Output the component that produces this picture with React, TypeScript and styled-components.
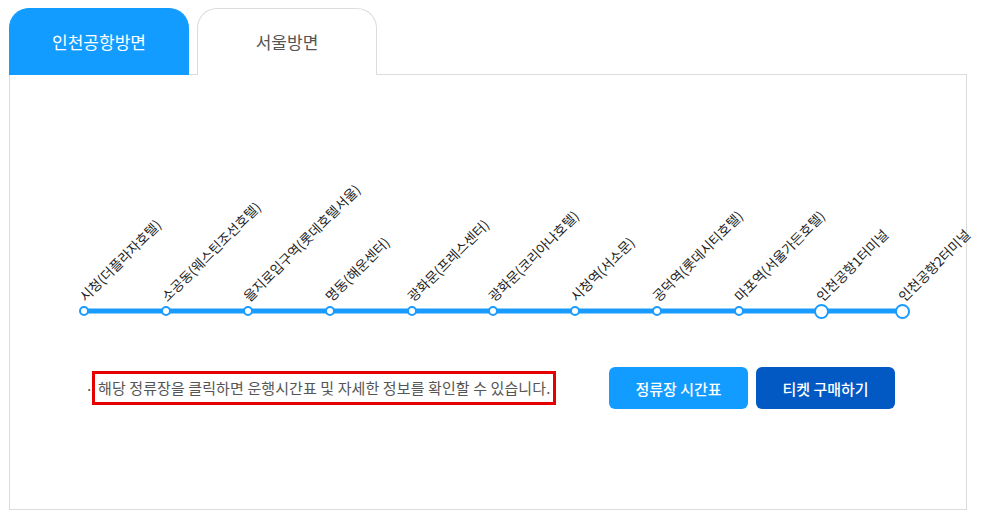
import React, { useState } from "react";
import styled, { createGlobalStyle } from "styled-components";

const GlobalStyle = createGlobalStyle`
  body {
    margin: 0;
    background: #fff;
    font-family: "Noto Sans CJK KR", "Noto Sans", sans-serif;
  }
`;

const STOPS = [
  "시청(더플라자호텔)",
  "소공동(웨스틴조선호텔)",
  "을지로입구역(롯데호텔서울)",
  "명동(해운센터)",
  "광화문(프레스센터)",
  "광화문(코리아나호텔)",
  "시청역(서소문)",
  "공덕역(롯데시티호텔)",
  "마포역(서울가든호텔)",
  "인천공항1터미널",
  "인천공항2터미널",
];

const Wrapper = styled.div`
  padding: 8px 0 0 9px;
`;

const Tabs = styled.div`
  display: flex;
  gap: 8px;
`;

const Tab = styled.button<{ $active?: boolean }>`
  width: 180px;
  height: 67px;
  border: 1px solid ${(p) => (p.$active ? "#139cff" : "#dcdcdc")};
  border-bottom: none;
  border-radius: 20px 20px 0 0;
  background: ${(p) => (p.$active ? "#139cff" : "#fff")};
  color: ${(p) => (p.$active ? "#fff" : "#555")};
  font-family: inherit;
  font-size: 17px;
  cursor: pointer;
  position: relative;
  z-index: ${(p) => (p.$active ? 1 : 0)};
  padding: 0 0 2px;
`;

const Panel = styled.div`
  width: 958px;
  height: 436px;
  box-sizing: border-box;
  margin-top: -1px;
  border: 1px solid #dcdcdc;
  display: flex;
  flex-direction: column;
`;

const Track = styled.div`
  position: relative;
  width: 819px;
  height: 16px;
  margin: 228px 0 0 74px;
  display: flex;
  justify-content: space-between;
  align-items: center;

  &::before {
    content: "";
    position: absolute;
    left: 0;
    right: 0;
    top: 50%;
    height: 5px;
    transform: translateY(-50%);
    background: #1a9bff;
  }
`;

const Stop = styled.div`
  position: relative;
  width: 0;
  height: 16px;
  display: flex;
  justify-content: center;
  align-items: center;
  cursor: pointer;
`;

const Dot = styled.span<{ $big?: boolean }>`
  position: relative;
  flex: none;
  box-sizing: border-box;
  width: ${(p) => (p.$big ? 15 : 10)}px;
  height: ${(p) => (p.$big ? 15 : 10)}px;
  border-radius: 50%;
  border: 2px solid #1a9bff;
  background: #fff;
`;

const Label = styled.span`
  position: absolute;
  left: 3px;
  bottom: 15px;
  transform-origin: left bottom;
  transform: rotate(-45deg);
  white-space: nowrap;
  font-size: 13.5px;
  line-height: 15px;
  color: #222;
`;

const InfoRow = styled.div`
  display: flex;
  align-items: center;
  justify-content: space-between;
  margin-top: 48px;
  padding: 0 71px 0 75px;
`;

const Notice = styled.p`
  margin: 0;
  display: flex;
  align-items: center;
  font-size: 15px;
  color: #555;
  letter-spacing: 0.1px;
`;

const Bullet = styled.span`
  width: 6px;
  margin-right: 1px;
`;

const Highlight = styled.span`
  border: 3px solid #e60000;
  padding: 3px 3px 4px 3px;
`;

const Buttons = styled.div`
  display: flex;
  gap: 8px;
`;

const ActionButton = styled.button<{ $dark?: boolean }>`
  width: 139px;
  height: 42px;
  border: none;
  border-radius: 6px;
  background: ${(p) => (p.$dark ? "#0259c3" : "#139cff")};
  color: #fff;
  font-family: inherit;
  font-size: 15px;
  font-weight: 500;
  cursor: pointer;
`;

export default function App() {
  const [dir, setDir] = useState(0);
  return (
    <Wrapper>
      <GlobalStyle />
      <Tabs>
        <Tab $active={dir === 0} onClick={() => setDir(0)}>
          인천공항방면
        </Tab>
        <Tab $active={dir === 1} onClick={() => setDir(1)}>
          서울방면
        </Tab>
      </Tabs>
      <Panel>
        <Track>
          {STOPS.map((name, i) => (
            <Stop key={name}>
              <Label>{name}</Label>
              <Dot $big={i >= STOPS.length - 2} />
            </Stop>
          ))}
        </Track>
        <InfoRow>
          <Notice>
            <Bullet>·</Bullet>
            <Highlight>
              해당 정류장을 클릭하면 운행시간표 및 자세한 정보를 확인할 수 있습니다.
            </Highlight>
          </Notice>
          <Buttons>
            <ActionButton>정류장 시간표</ActionButton>
            <ActionButton $dark>티켓 구매하기</ActionButton>
          </Buttons>
        </InfoRow>
      </Panel>
    </Wrapper>
  );
}
